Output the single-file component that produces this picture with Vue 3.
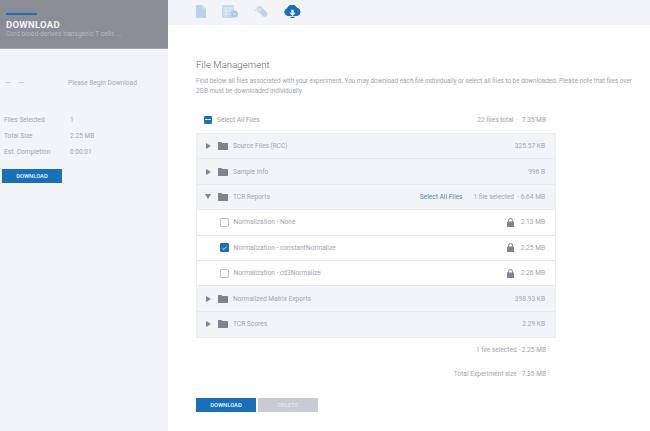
<script setup>
const top = [
  { name: 'Source Files (RCC)', size: '325.57 KB' },
  { name: 'Sample Info', size: '996 B' }
]
const files = [
  { name: 'Normalization - None', size: '2.13 MB', on: false },
  { name: 'Normalization - constantNormalize', size: '2.25 MB', on: true },
  { name: 'Normalization - cd3Normalize', size: '2.26 MB', on: false }
]
const bottom = [
  { name: 'Normalized Matrix Exports', size: '398.93 KB' },
  { name: 'TCR Scores', size: '2.29 KB' }
]
const stats = [
  ['Files Selected', '1'],
  ['Total Size', '2.25 MB'],
  ['Est. Completion', '0:00:01']
]
</script>

<template>
  <div class="page">
    <aside class="side">
      <header class="head">
        <div class="bar"></div>
        <div class="title">DOWNLOAD</div>
        <div class="sub">Cord blood-derived transgenic T cells ...</div>
      </header>
      <div class="status">
        <span class="dashes">— —</span>
        <span class="begin">Please Begin Download</span>
      </div>
      <div class="stats">
        <div v-for="s in stats" :key="s[0]" class="stat">
          <span class="k">{{ s[0] }}</span><span class="v">{{ s[1] }}</span>
        </div>
      </div>
      <button class="btn primary side-btn">DOWNLOAD</button>
    </aside>

    <main class="main">
      <nav class="tabs">
        <svg class="ic" width="10" height="13" viewBox="0 0 10 13"><path d="M1 0h5.500L10 3.500V12a1 1 0 0 1-1 1H1a1 1 0 0 1-1-1V1a1 1 0 0 1 1-1z" fill="#b9d3ea"/><path d="M6.500 0v3.500H10z" fill="#d8e6f2"/></svg>
        <svg class="ic" width="16" height="13" viewBox="0 0 16 13"><rect width="12" height="13" rx="1" fill="#c3d9ec"/><path d="M1 3h10M1 6h7M1 9h6M4 3v9M8 3v3" stroke="#f3f4f8" stroke-width=".8" fill="none"/><circle cx="12.500" cy="9" r="3.500" fill="#a9c9e5"/><path d="M11 9h3" stroke="#f3f4f8" stroke-width=".8"/></svg>
        <svg class="ic" width="14" height="13" viewBox="0 0 14 13"><path d="M5.500 4L10.500 9" stroke="#b9d3ea" stroke-width="5.500" stroke-linecap="round" fill="none"/><path d="M.8 5.800L5.800.8" stroke="#d3e3f1" stroke-width="1.600" stroke-linecap="round"/><path d="M2.500 6L6 2.500 8 4.500 4.500 8z" fill="#d3e3f1"/></svg>
        <svg class="ic last" width="17" height="13" viewBox="0 0 17 13"><path d="M4 10.500a3.500 3.500 0 0 1-.6-6.900A5 5 0 0 1 12.800 3.200 3.700 3.700 0 0 1 13 10.500z" fill="#1a70b8" stroke="#1a70b8"/><path d="M7.300 4.800h2.400v3h2L8.500 11 5.300 7.800h2z" fill="#f3f4f8"/><path d="M6.500 11.800h4V13h-4z" fill="#1a70b8"/></svg>
      </nav>

      <section class="content">
        <h1>File Management</h1>
        <p class="intro">Find below all files associated with your experiment. You may download each file individually or select all files to be downloaded. Please note that files over 2GB must be downloaded individually.</p>

        <div class="all">
          <span class="check minus"><i></i></span>
          <span class="all-label">Select All Files</span>
          <span class="grow"></span>
          <span>22 files total &nbsp;·&nbsp; 7.35 MB</span>
        </div>

        <div class="table">
          <div v-for="r in top" :key="r.name" class="row group">
            <span class="tri right"></span>
            <svg class="folder" viewBox="0 0 10 8"><path d="M0 .6C0 .3.300 0 .6 0h2.700l1 1h5.100c.3 0 .6.300.6.600v5.800c0 .3-.3.600-.6.600H.6C.3 8 0 7.700 0 7.400z"/></svg>
            <span class="name">{{ r.name }}</span>
            <span class="grow"></span>
            <span>{{ r.size }}</span>
          </div>

          <div class="row group">
            <span class="tri down"></span>
            <svg class="folder" viewBox="0 0 10 8"><path d="M0 .6C0 .3.300 0 .6 0h2.700l1 1h5.100c.3 0 .6.300.6.600v5.800c0 .3-.3.600-.6.600H.6C.3 8 0 7.700 0 7.400z"/></svg>
            <span class="name">TCR Reports</span>
            <span class="grow"></span>
            <span class="link">Select All Files</span>
            <span>1 file selected &nbsp;· 6.64 MB</span>
          </div>

          <div v-for="f in files" :key="f.name" class="row file">
            <span class="check" :class="{ on: f.on }">
              <svg v-if="f.on" viewBox="0 0 10 10" width="10" height="10"><path d="M2 5.200l2.100 2L8 3" fill="none" stroke="#fff" stroke-width="1.200"/></svg>
            </span>
            <span class="name">{{ f.name }}</span>
            <span class="grow"></span>
            <svg class="lock" viewBox="0 0 7 9"><path d="M1.500 4V2.500a2 2 0 0 1 4 0V4" fill="none" stroke="#80828e" stroke-width="1"/><rect y="3.500" width="7" height="5.500" rx=".5" fill="#80828e"/></svg>
            <span class="fsize">{{ f.size }}</span>
          </div>

          <div v-for="r in bottom" :key="r.name" class="row group">
            <span class="tri right"></span>
            <svg class="folder" viewBox="0 0 10 8"><path d="M0 .6C0 .3.300 0 .6 0h2.700l1 1h5.100c.3 0 .6.300.6.600v5.800c0 .3-.3.600-.6.600H.6C.3 8 0 7.700 0 7.400z"/></svg>
            <span class="name">{{ r.name }}</span>
            <span class="grow"></span>
            <span>{{ r.size }}</span>
          </div>
        </div>

        <div class="sum first">1 file selected · 2.25 MB</div>
        <div class="sum second">Total Experiment size · 7.35 MB</div>

        <div class="actions">
          <button class="btn primary">DOWNLOAD</button>
          <button class="btn disabled">DELETE</button>
        </div>
      </section>
    </main>
  </div>
</template>

<style>
html, body { margin: 0; background: #fff; }
</style>

<style scoped>
.page {
  display: flex;
  width: 650px;
  height: 431px;
  overflow: hidden;
  font-family: Roboto, "Liberation Sans", sans-serif;
  font-size: 6.600px;
  color: #a2a4ad;
}
.side { width: 168px; flex: none; background: #f3f4f8; box-sizing: border-box; }
.head { height: 49px; background: #8a8c96; padding: 13px 6px 0; box-sizing: border-box; border-bottom: 1px solid #a5a7af; }
.bar { width: 31px; height: 2px; background: #1a70b8; }
.title { margin-top: 4px; font-size: 9.500px; line-height: 11px; font-weight: 700; letter-spacing: .3px; color: #f3f4f8; }
.sub { font-size: 6.600px; line-height: 9px; color: #b9bbc3; }
.status { display: flex; margin-top: 29px; padding-left: 5px; height: 10px; line-height: 10px; }
.dashes { width: 63px; color: #80828c; font-size: 7.500px; font-weight: 300; word-spacing: 6px; }
.begin { color: #a6a8b1; }
.stats { margin-top: 24px; padding-left: 4px; }
.stat { display: flex; height: 16.200px; line-height: 16.200px; }
.k { width: 66px; }
.btn { border: 0; padding: 0; height: 14px; font: 500 5.800px Roboto, sans-serif; color: #f3f6fa; box-sizing: border-box; }
.primary { width: 60px; background: #1a70b8; }
.side-btn { display: block; margin: 8.300px 0 0 2px; height: 14.500px; }
.disabled { width: 60px; background: #c8cbd6; color: #e6e7ed; margin-left: 2px; }
.main { flex: 1; min-width: 0; }
.tabs { height: 25px; background: #f3f4f8; display: flex; align-items: center; padding-left: 28px; box-sizing: border-box; padding-bottom: 3px; }
.ic { flex: none; margin-right: 16px; }
.content { padding: 33px 0 0 28px; }
h1 { margin: 0; font-size: 9.500px; line-height: 13px; font-weight: 300; color: #5c5e68; letter-spacing: .1px; }
.intro { margin: 4.500px 0 0; line-height: 10.500px; width: 445px; font-size: 6.360px; }
.all { display: flex; align-items: center; height: 21px; width: 360px; box-sizing: border-box; margin-top: 13.500px; padding: 0 10px 2px 8px; }
.all-label { margin-left: 5px; }
.grow { flex: 1; }
.check { width: 8px; height: 8px; flex: none; box-sizing: border-box; border: 1px solid #c4c6ce; border-radius: 1px; background: #fff; display: inline-flex; align-items: center; justify-content: center; }
.minus { background: #1a70b8; border-color: #1a70b8; }
.minus i { display: block; width: 6px; height: 1px; background: #e8f0f8; }
.on { background: #1a70b8; border-color: #1a70b8; }
.table { border: 1px solid #eceef3; width: 360px; box-sizing: border-box; margin-top: 2px; }
.row { display: flex; align-items: center; height: 25.400px; box-sizing: border-box; border-bottom: 1px solid #e6e8ee; padding-right: 10px; }
.row:last-child { border-bottom: 0; }
.group { background: #f3f4f8; }
.file { background: #fff; padding-left: 23px; }
.file .name { margin-left: 4.500px; }
.file .check { width: 9px; height: 9px; }
.tri { width: 0; height: 0; flex: none; margin-left: 9px; }
.right { border-left: 5px solid #80828e; border-top: 3px solid transparent; border-bottom: 3px solid transparent; }
.down { border-top: 5px solid #80828e; border-left: 3px solid transparent; border-right: 3px solid transparent; margin-left: 8px; }
.folder { width: 10px; height: 8px; margin-left: 7px; fill: #80828e; flex: none; }
.name { margin-left: 5px; }
.link { color: #3d8ac9; margin-right: 11px; }
.lock { width: 7px; height: 9px; flex: none; }
.fsize { margin-left: 7px; }
.sum { text-align: right; padding-right: 10px; width: 360px; box-sizing: border-box; }
.first { margin-top: 8px; }
.second { margin-top: 16px; }
.actions { display: flex; margin-top: 20px; }
</style>
